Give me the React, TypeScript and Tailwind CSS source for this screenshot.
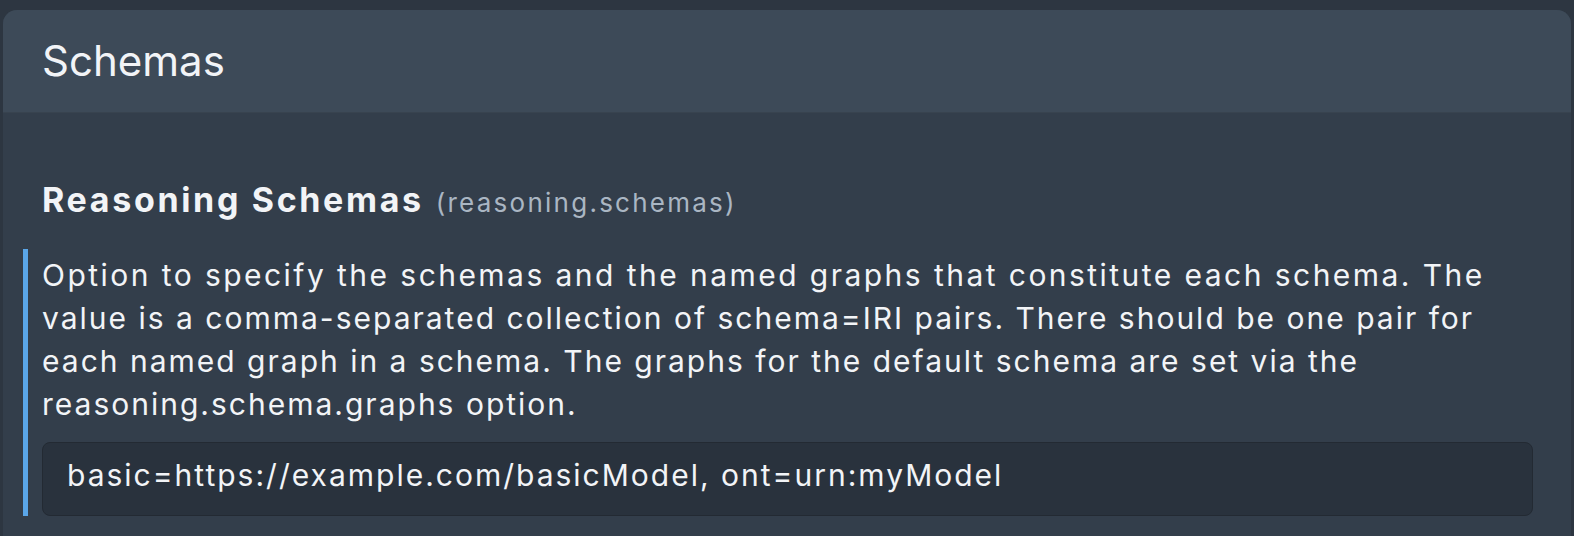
import React from "react";

export default function App() {
  return (
    <div
      className="min-h-screen bg-[#2d3641] pt-[10px] px-[3px] text-[#f2f4f7]"
      style={{ fontFamily: "Inter, 'Noto Sans', sans-serif" }}
    >
      <div className="rounded-t-[14px] overflow-hidden bg-[#333e4b]">
        <div className="bg-[#3d4a58] h-[103px] flex items-center pl-[39px] border-b border-[#38434f]">
          <h1 className="text-[42px] font-normal leading-none">Schemas</h1>
        </div>
        <div className="pl-[20px] pr-[38px] pt-[67px] pb-[22px]">
          <div className="pl-[19px] flex items-baseline gap-[12px] leading-[40px]">
            <span className="text-[34px] font-bold tracking-[2.65px]">Reasoning Schemas</span>
            <span className="text-[26px] text-[#aab6c3] tracking-[2.25px]">(reasoning.schemas)</span>
          </div>
          <div className="mt-[26px] border-l-[5px] border-[#5aa6e9] pl-[14px] pt-[5px]">
            <p className="text-[30px] leading-[43px] tracking-[2px] whitespace-nowrap">
              <span className="tracking-[2.45px]">
                Option to specify the schemas and the named graphs that constitute each schema. The
              </span>
              <br />
              value is a comma-separated collection of schema=IRI pairs. There should be one pair for
              <br />
              each named graph in a schema. The graphs for the default schema are set via the
              <br />
              reasoning.schema.graphs option.
            </p>
            <div className="mt-[16px] h-[74px] bg-[#29323d] border border-[#232a33] rounded-[8px] pl-[24px] pt-[11px]">
              <span className="text-[30px] leading-[43px] tracking-[2px]">
                basic=https://example.com/basicModel, ont=urn:myModel
              </span>
            </div>
          </div>
        </div>
      </div>
    </div>
  );
}
